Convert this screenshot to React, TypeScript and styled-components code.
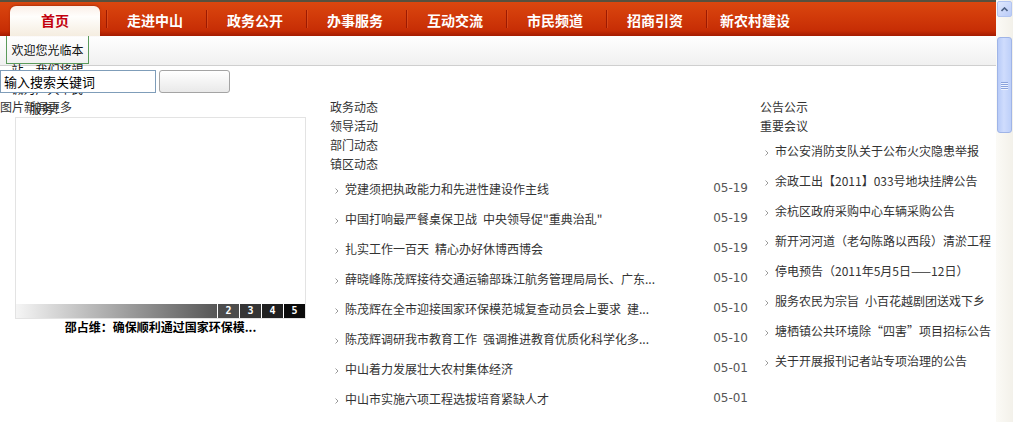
import React from 'react';
import styled, {createGlobalStyle} from 'styled-components';

const GlobalStyle = createGlobalStyle`
  html, body {
    margin: 0;
    padding: 0;
    height: 100%;
    overflow: hidden;
    background: #fff;
  }
  body {
    font-family: "Noto Sans CJK SC", "Liberation Sans", sans-serif;
    font-size: 12px;
    color: #333;
  }
`;

const NAV_ITEMS = ['首页', '走进中山', '政务公开', '办事服务', '互动交流', '市民频道', '招商引资', '新农村建设'];

const NEWS = [
  {title: '党建须把执政能力和先进性建设作主线', date: '05-19'},
  {title: '中国打响最严餐桌保卫战\u2002中央领导促"重典治乱"', date: '05-19'},
  {title: '扎实工作一百天\u2002精心办好休博西博会', date: '05-19'},
  {title: '薛晓峰陈茂辉接待交通运输部珠江航务管理局局长、广东...', date: '05-10'},
  {title: '陈茂辉在全市迎接国家环保模范城复查动员会上要求\u2002建...', date: '05-10'},
  {title: '陈茂辉调研我市教育工作\u2002强调推进教育优质化科学化多...', date: '05-10'},
  {title: '中山着力发展壮大农村集体经济', date: '05-01'},
  {title: '中山市实施六项工程选拔培育紧缺人才', date: '05-01'}
];

const NOTICES = [
  '市公安消防支队关于公布火灾隐患举报',
  '余政工出【2011】033号地块挂牌公告',
  '余杭区政府采购中心车辆采购公告',
  '新开河河道（老勾陈路以西段）清淤工程',
  '停电预告（2011年5月5日——12日）',
  '服务农民为宗旨\u2002小百花越剧团送戏下乡',
  '塘栖镇公共环境除“四害”项目招标公告',
  '关于开展报刊记者站专项治理的公告'
];

const Page = styled.div`
  display: flex;
  width: 1013px;
  height: 422px;
`;

const Main = styled.div`
  flex: 1;
  min-width: 0;
  overflow: hidden;
  background: #fff;
`;

const Nav = styled.nav`
  display: flex;
  height: 34px;
  padding-left: 5px;
  border-top: 2px solid #56503e;
  background: linear-gradient(to bottom, #da470f 0%, #d23b0a 40%, #c62d05 85%, #a51c02 100%);
`;

const NavTab = styled.a<{$active?: boolean}>`
  flex: 0 0 90px;
  margin: 4px 5px 0;
  padding-bottom: 2px;
  display: flex;
  align-items: center;
  justify-content: center;
  font-size: 14px;
  font-weight: bold;
  color: ${p => (p.$active ? '#c2000e' : '#fff')};
  background: ${p => (p.$active ? 'linear-gradient(to bottom, #fbefe8 0%, #fffefc 35%, #f5ede0 100%)' : 'none')};
  border-radius: 6px 6px 0 0;
  box-shadow: ${p => (p.$active ? '0 -1px 2px rgba(120, 20, 0, 0.4)' : 'none')};
  cursor: pointer;
`;

const NavSep = styled.span`
  align-self: center;
  width: 1px;
  height: 18px;
  margin: 0 -2px 0 1px;
  background: #9c1a02;
  box-shadow: 1px 0 0 rgba(240, 110, 60, 0.35);
`;

const SubHeader = styled.div`
  height: 29px;
  border-bottom: 1px solid #cfcfcf;
  background: linear-gradient(to bottom, #ffffff, #f0f0f0);
`;

const Welcome = styled.div`
  box-sizing: border-box;
  width: 83px;
  height: 28px;
  margin-left: 6px;
  padding-top: 4px;
  border: 1px solid #5b9b5b;
  border-top: none;
  text-align: center;
  line-height: 19.5px;
  color: #111;
`;

const SearchRow = styled.div`
  display: flex;
  gap: 3px;
  margin-top: 4px;
  height: 23px;
`;

const SearchInput = styled.input`
  box-sizing: border-box;
  width: 156px;
  height: 23px;
  margin: 0;
  padding: 0 3px;
  border: 1px solid #7f9db9;
  background: #fff;
  font-family: "Noto Sans CJK SC", sans-serif;
  font-size: 13px;
  color: #000;
  outline: none;
`;

const SearchButton = styled.button`
  box-sizing: border-box;
  width: 71px;
  height: 23px;
  margin: 0;
  border: 1px solid #a4a4a4;
  border-radius: 3px;
  background: linear-gradient(to bottom, #ffffff, #e9e9e9);
`;

const Columns = styled.div`
  display: flex;
  margin-top: 4px;
`;

const LeftCol = styled.div`
  flex: 0 0 330px;
`;

const MidCol = styled.div`
  flex: 0 0 430px;
`;

const RightCol = styled.div`
  flex: 1;
  min-width: 0;
`;

const TabLine = styled.div`
  line-height: 19px;
  color: #333;
  white-space: nowrap;
`;

const ImageFrame = styled.div`
  box-sizing: border-box;
  width: 291px;
  height: 202px;
  margin: 1px 0 0 15px;
  border: 1px solid #e3e3e3;
  background: #fff;
  display: flex;
  flex-direction: column;
  justify-content: flex-end;
`;

const SlideBar = styled.div`
  display: flex;
  height: 14px;
  background: linear-gradient(to right, #f5f5f5 0%, #5a5a5a 68%, #111 100%);
`;

const SlideNum = styled.span<{$shade: string}>`
  width: 22px;
  box-sizing: border-box;
  border-left: 1px solid #fff;
  background: ${p => p.$shade};
  color: #fff;
  font-family: "DejaVu Sans Mono", monospace;
  font-size: 10px;
  font-weight: bold;
  line-height: 14px;
  text-align: center;
  &:first-child {
    margin-left: auto;
  }
`;

const Caption = styled.div`
  width: 291px;
  margin-left: 15px;
  text-align: center;
  font-weight: bold;
  line-height: 16px;
  color: #000;
`;

const NewsList = styled.ul<{$padRight?: number}>`
  list-style: none;
  margin: 0;
  padding: 0 ${p => p.$padRight ?? 0}px 0 5px;
`;

const NewsItem = styled.li`
  display: flex;
  align-items: center;
  height: 30px;
  white-space: nowrap;
`;

const Bullet = styled.svg`
  flex: 0 0 4px;
  margin: 5px 6px 0 0;
`;

const Title = styled.span`
  flex: 1;
  color: #333;
`;

const DateText = styled.span`
  font-family: "DejaVu Sans", sans-serif;
  font-size: 12px;
  color: #555;
`;

const Scrollbar = styled.div`
  width: 17px;
  display: flex;
  flex-direction: column;
  align-items: center;
  background: linear-gradient(to right, #fbfaf6, #f3f1ea);
`;

const ScrollButton = styled.div`
  box-sizing: border-box;
  width: 15px;
  height: 16px;
  margin-top: 1px;
  display: flex;
  align-items: center;
  justify-content: center;
  border: 1px solid #b3c5f1;
  border-radius: 2px;
  background: linear-gradient(135deg, #e0e9fe, #bacbf7);
`;

const ScrollThumb = styled.div`
  box-sizing: border-box;
  width: 15px;
  height: 96px;
  margin-top: 20px;
  display: flex;
  flex-direction: column;
  align-items: center;
  justify-content: center;
  gap: 1px;
  border: 1px solid #9fb4e7;
  border-radius: 3px;
  background: linear-gradient(to right, #b8cbf8, #cfdcfd 45%, #bdcff9);
`;

const Grip = styled.span`
  width: 7px;
  height: 1px;
  background: #8aa2dc;
  box-shadow: 0 1px 0 #eef3ff;
`;

const ChevronBullet = () => (
  <Bullet width="4" height="6" viewBox="0 0 4 6">
    <polyline points="0.5,0.5 3,3 0.5,5.5" fill="none" stroke="#9a9a9a" strokeWidth="1" />
  </Bullet>
);

export default function App() {
  return (
    <>
      <GlobalStyle />
      <Page>
        <Main>
          <Nav>
            {NAV_ITEMS.map((name, i) => (
              <React.Fragment key={name}>
                <NavTab $active={i === 0}>{name}</NavTab>
                {i < NAV_ITEMS.length - 1 && <NavSep />}
              </React.Fragment>
            ))}
          </Nav>
          <SubHeader>
            <Welcome>欢迎您光临本站，我们将竭诚为广大市民服务！</Welcome>
          </SubHeader>
          <SearchRow>
            <SearchInput defaultValue="输入搜索关键词" />
            <SearchButton type="button" />
          </SearchRow>
          <Columns>
            <LeftCol>
              <TabLine>
                <span>图片新闻</span>
                <span>更多</span>
              </TabLine>
              <ImageFrame>
                <SlideBar>
                  <SlideNum $shade="#4c4c4c">2</SlideNum>
                  <SlideNum $shade="#353535">3</SlideNum>
                  <SlideNum $shade="#202020">4</SlideNum>
                  <SlideNum $shade="#0b0b0b">5</SlideNum>
                </SlideBar>
              </ImageFrame>
              <Caption>邵占维：确保顺利通过国家环保模...</Caption>
            </LeftCol>
            <MidCol>
              <TabLine>政务动态</TabLine>
              <TabLine>领导活动</TabLine>
              <TabLine>部门动态</TabLine>
              <TabLine>镇区动态</TabLine>
              <NewsList $padRight={12}>
                {NEWS.map(n => (
                  <NewsItem key={n.title}>
                    <ChevronBullet />
                    <Title>{n.title}</Title>
                    <DateText>{n.date}</DateText>
                  </NewsItem>
                ))}
              </NewsList>
            </MidCol>
            <RightCol>
              <TabLine>公告公示</TabLine>
              <TabLine>重要会议</TabLine>
              <NewsList>
                {NOTICES.map(t => (
                  <NewsItem key={t}>
                    <ChevronBullet />
                    <Title>{t}</Title>
                  </NewsItem>
                ))}
              </NewsList>
            </RightCol>
          </Columns>
        </Main>
        <Scrollbar>
          <ScrollButton>
            <svg width="7" height="5" viewBox="0 0 7 5">
              <polyline points="0.5,4 3.5,1 6.5,4" fill="none" stroke="#4d6185" strokeWidth="1.6" />
            </svg>
          </ScrollButton>
          <ScrollThumb>
            <Grip />
            <Grip />
            <Grip />
            <Grip />
          </ScrollThumb>
        </Scrollbar>
      </Page>
    </>
  );
}
